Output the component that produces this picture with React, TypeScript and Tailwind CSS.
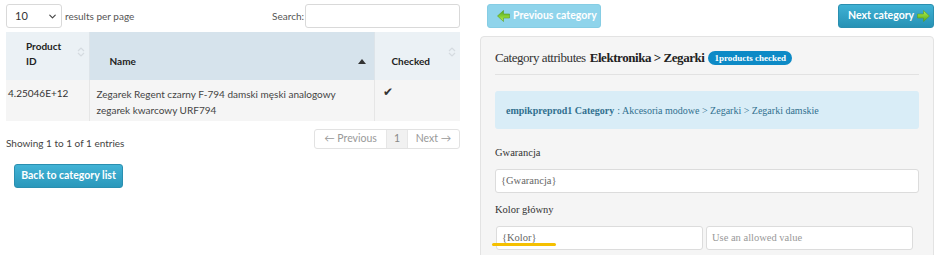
import { ChevronDown } from "lucide-react";

const sans = { fontFamily: "Lato, 'Open Sans', sans-serif" };

function SortBoth() {
  return (
    <svg width="8" height="12" viewBox="0 0 8 12" className="text-[#d5dbe0]">
      <path d="M1 5 L4 2 L7 5" fill="none" stroke="currentColor" strokeWidth="1.2" />
      <path d="M1 7 L4 10 L7 7" fill="none" stroke="currentColor" strokeWidth="1.2" />
    </svg>
  );
}

function SortUp() {
  return (
    <svg width="8" height="5" viewBox="0 0 8 5">
      <path d="M0 5 L4 0 L8 5 Z" fill="#333" />
    </svg>
  );
}

function GreenArrow({ left = false }: { left?: boolean }) {
  return (
    <svg width="13" height="12" viewBox="0 0 13 12" className={left ? "rotate-180 shrink-0" : "shrink-0"}>
      <defs>
        <linearGradient id={left ? "ga-l" : "ga-r"} x1="0" y1="0" x2="0" y2="1">
          <stop offset="0" stopColor="#b6f24a" />
          <stop offset="1" stopColor="#4fa81c" />
        </linearGradient>
      </defs>
      <path
        d="M0.5 4 H6.5 V0.5 L12.5 6 L6.5 11.5 V8 H0.5 Z"
        fill={`url(#${left ? "ga-l" : "ga-r"})`}
        stroke="#5a9a25"
        strokeWidth="0.6"
      />
    </svg>
  );
}

function ProductTable() {
  return (
    <div className="pl-[6px] pt-[4px] w-[460px]" style={sans}>
      <div className="flex items-center justify-between h-[24px]">
        <div className="flex items-center gap-[3px]">
          <div className="flex items-center justify-between w-[56px] h-[24px] rounded-[3px] border border-[#d9d9d9] pl-[8px] pr-[3px] text-[11px] text-[#333]">
            <span>10</span>
            <ChevronDown size={11} strokeWidth={2.5} className="text-[#444]" />
          </div>
          <span className="text-[10px] text-[#555]">results per page</span>
        </div>
        <div className="flex items-center">
          <span className="text-[10px] text-[#555]">Search:</span>
          <div className="ml-[1px] w-[155px] h-[24px] rounded-[3px] border border-[#d9d9d9]" />
        </div>
      </div>

      <table className="mt-[4px] w-[454px] border-collapse text-[10px] text-[#333] table-fixed">
        <thead>
          <tr className="h-[48px] font-bold text-[#222]">
            <th className="w-[83px] bg-[#ebf1f5] border-r border-[#dde4e9] align-bottom text-left pl-[20px] pb-[11px] leading-[15px] relative">
              Product
              <br />
              ID
              <span className="absolute right-[4px] top-[14px]"><SortBoth /></span>
            </th>
            <th className="w-[285px] bg-[#d6e3ec] align-bottom text-left pl-[20px] pb-[11px] relative">
              Name
              <span className="absolute right-[8px] top-[27px]"><SortUp /></span>
            </th>
            <th className="bg-[#ebf1f5] border-l border-[#dde4e9] align-bottom text-left pl-[17px] pb-[11px] relative">
              Checked
              <span className="absolute right-[4px] top-[14px]"><SortBoth /></span>
            </th>
          </tr>
        </thead>
        <tbody>
          <tr className="h-[41px] bg-[#f5f5f5]">
            <td className="align-top pl-[2px] pt-[6px] border-r border-[#e6e6e6]">4.25046E+12</td>
            <td className="align-top pl-[7px] pt-[6px] leading-[16px] text-[#444]">
              Zegarek Regent czarny F-794 damski męski analogowy
              <br />
              zegarek kwarcowy URF794
            </td>
            <td className="align-top pl-[8px] pt-[3px] border-l border-[#e6e6e6]">
              <span className="text-[12px]">✔</span>
            </td>
          </tr>
        </tbody>
      </table>

      <div className="flex items-start justify-between mt-[8px]">
        <span className="text-[10px] text-[#444] mt-[7px]">Showing 1 to 1 of 1 entries</span>
        <div className="flex h-[20px] rounded-[3px] border border-[#e2e2e2] text-[10.5px] text-[#999] overflow-hidden whitespace-nowrap">
          <span className="flex items-center justify-center w-[71px]">← Previous</span>
          <span className="flex items-center justify-center w-[22px] bg-[#f1f1f1] text-[#888] border-x border-[#e6e6e6]">1</span>
          <span className="flex items-center justify-center w-[51px]">Next →</span>
        </div>
      </div>

      <button className="mt-[13px] ml-[8px] h-[24px] w-[109px] rounded-[3px] bg-gradient-to-b from-[#42b3d6] to-[#2a98bb] border border-[#2a8fb0] text-white text-[10.5px] font-bold whitespace-nowrap">
        Back to category list
      </button>
    </div>
  );
}

function AttributesPanel() {
  const serif = { fontFamily: "'Liberation Serif', 'Times New Roman', serif" };
  return (
    <div className="w-[454px] ml-[20px] pt-[4px]">
      <div className="flex justify-between h-[24px] pl-[7px]" style={sans}>
        <button className="flex items-center gap-[3px] h-[24px] w-[114px] pl-[9px] rounded-[3px] bg-[#8fd4eb] border border-[#86cde4] text-white text-[10.5px] font-bold whitespace-nowrap">
          <GreenArrow left />
          Previous category
        </button>
        <button className="flex items-center gap-[3px] h-[24px] w-[96px] pl-[9px] rounded-[3px] bg-gradient-to-b from-[#3fb1d4] to-[#2792b5] border border-[#2a8fb0] text-white text-[10.5px] font-bold whitespace-nowrap">
          Next category
          <GreenArrow />
        </button>
      </div>

      <div className="mt-[8px] h-[240px] rounded-[4px] border border-[#e3e3e3] bg-[#f5f5f5] px-[14px] pt-[12px]" style={serif}>
        <div className="flex items-center h-[18px] text-[13px] tracking-[-0.45px] text-[#333]">
          <span>Category attributes</span>
          <span className="ml-[4px] font-bold text-[#222]">Elektronika &gt; Zegarki</span>
          <span className="ml-[4px] h-[14px] px-[6px] rounded-full bg-[#0d8ac6] text-white text-[9px] tracking-normal font-bold leading-[14px]">
            1products checked
          </span>
        </div>
        <div className="mt-[7px] border-t border-[#e2e2e2]" />

        <div className="mt-[16px] h-[38px] rounded-[3px] bg-[#d9edf7] flex items-center pl-[11px] text-[10px] text-[#31708f]">
          <span className="font-bold">empikpreprod1 Category</span>
          <span className="ml-[3px]">: Akcesoria modowe &gt; Zegarki &gt; Zegarki damskie</span>
        </div>

        <div className="mt-[17px] text-[10.5px] text-[#333] leading-[13px]">Gwarancja</div>
        <div className="mt-[10px] h-[24px] rounded-[3px] border border-[#dcdcdc] bg-white flex items-center pl-[5px] text-[10.5px] text-[#666]">
          {"{Gwarancja}"}
        </div>

        <div className="mt-[10px] text-[10.5px] text-[#333] leading-[13px]">Kolor główny</div>
        <div className="mt-[10px] flex gap-[3px] pl-[1px]">
          <div className="relative w-[207px] h-[24px] rounded-[3px] border border-[#dcdcdc] bg-white flex items-center pl-[5px] text-[10.5px] text-[#666]">
            {"{Kolor}"}
            <span className="absolute left-[-5px] top-[16px] w-[64px] h-[3px] rounded-full bg-[#f5c000]" />
          </div>
          <div className="w-[207px] h-[24px] rounded-[3px] border border-[#dcdcdc] bg-white flex items-center pl-[5px] text-[10.5px] text-[#999]">
            Use an allowed value
          </div>
        </div>
      </div>
    </div>
  );
}

export default function App() {
  return (
    <div className="flex w-[945px] h-[255px] overflow-hidden bg-white">
      <ProductTable />
      <AttributesPanel />
    </div>
  );
}
